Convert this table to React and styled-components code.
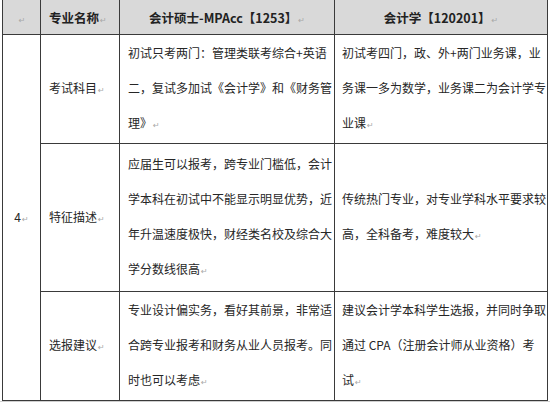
import React from "react";
import styled, { createGlobalStyle } from "styled-components";

const GlobalStyle = createGlobalStyle`
  html, body {
    margin: 0;
    padding: 0;
    background: #ffffff;
  }
  body {
    font-family: "Noto Sans CJK SC", "Noto Sans", sans-serif;
    color: #262626;
  }
`;

const Page = styled.div`
  width: 550px;
  padding-left: 2px;
  box-sizing: border-box;
`;

const Table = styled.table`
  width: 545px;
  border-collapse: collapse;
  table-layout: fixed;
  font-size: 12px;
`;

const HeadCell = styled.th`
  height: 34px;
  padding: 0 8px;
  background: #d9d9d9;
  border: 1px solid #3a3a3a;
  border-top: none;
  font-weight: 700;
  font-size: 12.5px;
  color: #222;
  text-align: ${({ align }) => align || "center"};
  white-space: nowrap;
  vertical-align: middle;
`;

const Cell = styled.td`
  height: ${({ h }) => h}px;
  padding: 0 ${({ pad }) => (pad === undefined ? 8 : pad)}px;
  border: 1px solid #3a3a3a;
  text-align: ${({ align }) => align || "left"};
  vertical-align: middle;
  line-height: 35px;
  white-space: nowrap;
  overflow: hidden;
`;

const Line = styled.div`
  display: block;
`;

const Mark = styled.span`
  font-family: "DejaVu Sans", sans-serif;
  font-size: 8px;
  font-weight: 400;
  color: #a8a8a8;
  margin-left: 1px;
`;

const Strip = styled.div`
  height: 2px;
  background: #cfcfcf;
  margin-left: -2px;
`;

const P = "\u21B5";

const rows = [
  {
    label: "考试科目",
    h: 108,
    mpacc: ["初试只考两门：管理类联考综合+英语", "二，复试多加试《会计学》和《财务管", "理》"],
    acc: ["初试考四门，政、外+两门业务课，业", "务课一多为数学，业务课二为会计学专", "业课"],
  },
  {
    label: "特征描述",
    h: 147,
    mpacc: [
      "应届生可以报考，跨专业门槛低，会计",
      "学本科在初试中不能显示明显优势，近",
      "年升温速度极快，财经类名校及综合大",
      "学分数线很高",
    ],
    acc: ["传统热门专业，对专业学科水平要求较", "高，全科备考，难度较大"],
  },
  {
    label: "选报建议",
    h: 107,
    mpacc: ["专业设计偏实务，看好其前景，非常适", "合跨专业报考和财务从业人员报考。同", "时也可以考虑"],
    acc: ["建议会计学本科学生选报，并同时争取", "通过 CPA（注册会计师从业资格）考", "试"],
  },
];

const Lines = ({ items }) =>
  items.map((text, i) => (
    <Line key={i}>
      {text}
      {i === items.length - 1 && <Mark>{P}</Mark>}
    </Line>
  ));

export default function App() {
  return (
    <Page>
      <GlobalStyle />
      <Table>
        <colgroup>
          <col style={{ width: 38 }} />
          <col style={{ width: 79 }} />
          <col style={{ width: 215 }} />
          <col style={{ width: 213 }} />
        </colgroup>
        <thead>
          <tr>
            <HeadCell>
              <Mark>{P}</Mark>
            </HeadCell>
            <HeadCell align="left">
              专业名称<Mark>{P}</Mark>
            </HeadCell>
            <HeadCell>
              会计硕士-MPAcc【1253】<Mark>{P}</Mark>
            </HeadCell>
            <HeadCell>
              会计学【120201】<Mark>{P}</Mark>
            </HeadCell>
          </tr>
        </thead>
        <tbody>
          {rows.map((row, i) => (
            <tr key={row.label}>
              {i === 0 && (
                <Cell rowSpan={rows.length} align="center" pad={0}>
                  4<Mark>{P}</Mark>
                </Cell>
              )}
              <Cell h={row.h}>
                {row.label}
                <Mark>{P}</Mark>
              </Cell>
              <Cell h={row.h}>
                <Lines items={row.mpacc} />
              </Cell>
              <Cell h={row.h} pad={7}>
                <Lines items={row.acc} />
              </Cell>
            </tr>
          ))}
        </tbody>
      </Table>
      <Strip />
    </Page>
  );
}
